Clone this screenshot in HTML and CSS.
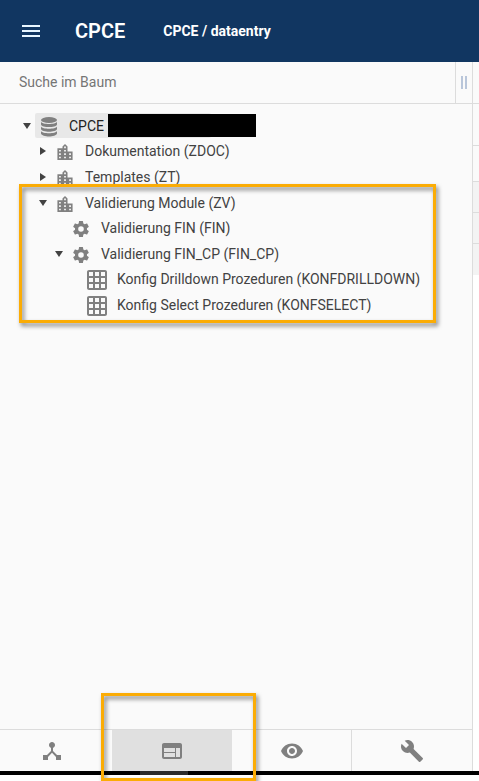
FILE: index.html
```
<!DOCTYPE html>
<html lang="de">
<head>
    <meta charset="UTF-8">
    <meta name="viewport" content="width=device-width, initial-scale=1.0">
    <title>CPCE / dataentry</title>
    <link rel="stylesheet" href="styles.css">
</head>
<body>
    <svg class="symbols" aria-hidden="true">
        <symbol id="database" viewBox="0 0 18 20">
            <ellipse cx="9" cy="3" rx="8" ry="3"/>
            <path d="M1 4.800c1 3 15 3 16 0v2.600c-1 3.600-15 3.600-16 0z"/>
            <path d="M1 9.400c1 3 15 3 16 0v2.600c-1 3.600-15 3.600-16 0z"/>
            <path d="M1 14c1 3 15 3 16 0v2.600c-1 4-15 4-16 0z"/>
        </symbol>
        <symbol id="building" viewBox="3 2 18 19">
            <path d="M15 11V5l-3-3-3 3v2H3v14h18V11h-6zm-8 8H5v-2h2v2zm0-4H5v-2h2v2zm0-4H5V9h2v2zm6 8h-2v-2h2v2zm0-4h-2v-2h2v2zm0-4h-2V9h2v2zm0-4h-2V5h2v2zm6 12h-2v-2h2v2zm0-4h-2v-2h2v2z"/>
        </symbol>
        <symbol id="gear" viewBox="2 2 20 20">
            <path d="M12 15.500A3.500 3.500 0 0 1 8.500 12 3.500 3.500 0 0 1 12 8.500a3.500 3.500 0 0 1 3.500 3.500 3.500 3.500 0 0 1-3.500 3.500m7.430-2.530c.04-.32.07-.64.07-.97s-.03-.66-.07-1l2.110-1.630c.19-.15.24-.42.12-.64l-2-3.460c-.12-.22-.39-.31-.61-.22l-2.490 1c-.52-.39-1.060-.73-1.690-.98l-.37-2.650A.506.506 0 0 0 14 2h-4c-.25 0-.46.18-.5.42l-.37 2.650c-.63.25-1.170.59-1.690.98l-2.490-1c-.22-.09-.49 0-.61.22l-2 3.460c-.13.22-.07.49.12.64L4.570 11c-.04.34-.07.67-.07 1s.03.65.07.97l-2.110 1.660c-.19.15-.25.42-.12.64l2 3.460c.12.22.39.3.61.22l2.490-1.010c.52.4 1.060.74 1.690.99l.37 2.650c.04.24.25.42.5.42h4c.25 0 .46-.18.5-.42l.37-2.650c.63-.26 1.170-.59 1.690-.99l2.490 1.010c.22.08.49 0 .61-.22l2-3.460c.12-.22.07-.49-.12-.64z"/>
        </symbol>
        <symbol id="grid" viewBox="2 2 20 20">
            <path d="M20 2H4c-1.100 0-2 .9-2 2v16c0 1.100.9 2 2 2h16c1.100 0 2-.9 2-2V4c0-1.100-.9-2-2-2zM8 20H4v-4h4v4zm0-6H4v-4h4v4zm0-6H4V4h4v4zm6 12h-4v-4h4v4zm0-6h-4v-4h4v4zm0-6h-4V4h4v4zm6 12h-4v-4h4v4zm0-6h-4v-4h4v4zm0-6h-4V4h4v4z"/>
        </symbol>
        <symbol id="arrow" viewBox="0 0 8 8">
            <path d="M0 1h8L4 7z"/>
        </symbol>
    </svg>

    <header class="topbar">
        <button class="menu" aria-label="Menü">
            <svg viewBox="0 0 24 24"><path d="M3 18h18v-2H3v2zm0-5h18v-2H3v2zm0-7v2h18V6H3z"/></svg>
        </button>
        <h1 class="title">CPCE</h1>
        <p class="path">CPCE / dataentry</p>
    </header>

    <main class="content">
        <section class="sidebar">
            <div class="search">
                <input class="search-input" type="text" placeholder="Suche im Baum" aria-label="Suche im Baum">
                <button class="handle" aria-label="Breite ändern"></button>
            </div>
            <ul class="tree">
                <li>
                    <div class="row open">
                        <button class="toggle" aria-label="CPCE zuklappen"><svg><use href="#arrow"/></svg></button>
                        <div class="node selected">
                            <span class="icon icon--database"><svg><use href="#database"/></svg></span>
                            <span class="label">CPCE</span>
                            <span class="redacted"></span>
                        </div>
                    </div>
                    <ul>
                        <li>
                            <div class="row">
                                <button class="toggle closed" aria-label="Dokumentation aufklappen"><svg><use href="#arrow"/></svg></button>
                                <span class="icon"><svg><use href="#building"/></svg></span>
                                <span class="label">Dokumentation (ZDOC)</span>
                            </div>
                        </li>
                        <li>
                            <div class="row">
                                <button class="toggle closed" aria-label="Templates aufklappen"><svg><use href="#arrow"/></svg></button>
                                <span class="icon"><svg><use href="#building"/></svg></span>
                                <span class="label">Templates (ZT)</span>
                            </div>
                        </li>
                        <li class="marked">
                            <div class="row open">
                                <button class="toggle" aria-label="Validierung Module zuklappen"><svg><use href="#arrow"/></svg></button>
                                <span class="icon"><svg><use href="#building"/></svg></span>
                                <span class="label">Validierung Module (ZV)</span>
                            </div>
                            <ul>
                                <li>
                                    <div class="row">
                                        <span class="toggle"></span>
                                        <span class="icon"><svg><use href="#gear"/></svg></span>
                                        <span class="label">Validierung FIN (FIN)</span>
                                    </div>
                                </li>
                                <li>
                                    <div class="row open">
                                        <button class="toggle" aria-label="Validierung FIN_CP zuklappen"><svg><use href="#arrow"/></svg></button>
                                        <span class="icon"><svg><use href="#gear"/></svg></span>
                                        <span class="label">Validierung FIN_CP (FIN_CP)</span>
                                    </div>
                                    <ul>
                                        <li>
                                            <div class="row">
                                                <span class="toggle"></span>
                                                <span class="icon icon--grid"><svg><use href="#grid"/></svg></span>
                                                <span class="label">Konfig Drilldown Prozeduren (KONFDRILLDOWN)</span>
                                            </div>
                                        </li>
                                        <li>
                                            <div class="row">
                                                <span class="toggle"></span>
                                                <span class="icon icon--grid"><svg><use href="#grid"/></svg></span>
                                                <span class="label">Konfig Select Prozeduren (KONFSELECT)</span>
                                            </div>
                                        </li>
                                    </ul>
                                </li>
                            </ul>
                            <div class="marker marker--tree"></div>
                        </li>
                    </ul>
                </li>
            </ul>
            <nav class="tabs">
                <button class="tab" aria-label="Struktur">
                    <svg viewBox="0 0 24 24"><path d="M17 16l-4-4V8.820C14.160 8.400 15 7.300 15 6c0-1.660-1.340-3-3-3S9 4.340 9 6c0 1.300.84 2.400 2 2.820V12l-4 4H3v5h5v-3.050l4-4.200 4 4.200V21h5v-5h-4z"/></svg>
                </button>
                <button class="tab active" aria-label="Masken">
                    <svg viewBox="0 0 24 24"><path d="M20 4H4c-1.100 0-1.990.9-1.990 2L2 18c0 1.100.9 2 2 2h16c1.100 0 2-.9 2-2V6c0-1.100-.9-2-2-2zm-5 14H4v-4h11v4zm0-5H4V9h11v4zm5 5h-4V9h4v9z"/></svg>
                </button>
                <button class="tab" aria-label="Ansicht">
                    <svg viewBox="0 0 24 24"><path d="M12 4.500C7 4.500 2.730 7.610 1 12c1.730 4.390 6 7.500 11 7.500s9.270-3.110 11-7.500c-1.730-4.390-6-7.500-11-7.500zM12 17c-2.760 0-5-2.240-5-5s2.240-5 5-5 5 2.240 5 5-2.240 5-5 5zm0-8c-1.660 0-3 1.340-3 3s1.340 3 3 3 3-1.340 3-3-1.340-3-3-3z"/></svg>
                </button>
                <button class="tab" aria-label="Werkzeuge">
                    <svg viewBox="0 0 24 24"><path d="M22.700 19l-9.100-9.100c.9-2.300.4-5-1.500-6.900-2-2-5-2.400-7.400-1.300L9 6 6 9 1.600 4.700C.4 7.100.9 10.100 2.900 12.100c1.900 1.900 4.600 2.400 6.900 1.500l9.100 9.100c.4.4 1 .4 1.400 0l2.300-2.300c.5-.4.5-1.100.1-1.400z"/></svg>
                </button>
            </nav>
        </section>
        <section class="panel">
            <div class="panel-top"></div>
            <div class="panel-bar"></div>
            <div class="panel-head"></div>
            <div class="panel-row"></div>
            <div class="panel-row"></div>
            <div class="panel-row"></div>
        </section>
    </main>
    <footer class="bottom">
        <div class="thumb"></div>
        <div class="marker marker--tab"></div>
    </footer>
</body>
</html>
```
FILE: styles.css
```
*{
    box-sizing: border-box;
}
body{
    margin: 0;
    height: 100vh;
    display: flex;
    flex-direction: column;
    overflow: hidden;
    background-color: #fff;
    color: #424242;
    font-family: Roboto, Arial, sans-serif;
    font-size: 14px;
}
button{
    border: none;
    padding: 0;
    background: none;
    cursor: pointer;
}
svg{
    display: block;
    fill: #808080;
}
.symbols{
    display: none;
}

/* header */
.topbar{
    display: flex;
    align-items: center;
    height: 62px;
    padding: 0 19px;
    background-color: #113661;
    color: white;
}
.menu svg{
    width: 24px;
    height: 24px;
    fill: #e8f6ff;
}
.title{
    margin: 0 38px 0 32px;
    font-size: 20px;
    font-weight: 600;
}
.path{
    margin: 0;
    font-weight: bold;
}

.content{
    flex: 1;
    display: grid;
    grid-template-columns: 1fr 7px;
    min-height: 0;
}
.sidebar{
    display: flex;
    flex-direction: column;
    min-width: 0;
    background-color: #fafafa;
}
.search{
    display: flex;
    height: 42px;
    border-bottom: 1px solid #dcdcdc;
}
.search-input{
    flex: 1;
    min-width: 0;
    border: none;
    padding: 0 19px 2px;
    background: none;
    font: inherit;
}
.search-input::placeholder{
    color: #757575;
}
.handle{
    display: flex;
    justify-content: center;
    align-items: center;
    width: 17px;
    border-left: 1px solid #dcdcdc;
}
.handle::before{
    content: "";
    width: 2px;
    height: 13px;
    border: 2px solid #b9c6da;
    border-width: 0 2px;
}

/* tree */
.tree{
    flex: 1;
    padding: 9px 0 0 19px;
}
ul{
    margin: 0;
    padding: 0;
    list-style: none;
}
ul ul{
    padding-left: 16px;
}
.row{
    display: flex;
    align-items: center;
    height: 26px;
    white-space: nowrap;
}
.row.open{
    height: 25px;
}
.toggle{
    flex: none;
    width: 16px;
}
.toggle svg{
    width: 8px;
    height: 8px;
    margin: 0 auto;
    fill: #424242;
}
.closed svg{
    transform: rotate(-90deg);
}
.icon{
    display: flex;
    flex: none;
    justify-content: center;
    width: 28px;
    margin-right: 6px;
    padding-top: 2px;
}
.icon svg{
    width: 16px;
    height: 16px;
}
.icon--database svg{
    width: 18px;
    height: 20px;
}
.icon--grid svg{
    width: 20px;
    height: 20px;
}
.node{
    display: flex;
    align-items: center;
    height: 25px;
}
.selected{
    width: 176px;
    border-radius: 2px;
    background-color: #e8e8e8;
    color: #212121;
}
.redacted{
    flex: none;
    width: 148px;
    height: 23px;
    margin-left: 4px;
    background-color: #000;
}

/* orange highlight frames */
.marked{
    position: relative;
}
.marker{
    position: absolute;
    border: 3px solid #fbac05;
    filter: drop-shadow(2px 3px 2px rgba(0, 0, 0, 0.5));
    pointer-events: none;
}
.marker--tree{
    top: -6px;
    left: -16px;
    right: 36px;
    bottom: -5px;
}
.marker--tab{
    left: 101px;
    bottom: 0;
    width: 155px;
    height: 88px;
}

/* tabs */
.tabs{
    display: grid;
    grid-template-columns: repeat(4, 1fr);
    height: 42px;
    margin-left: -8px;
    border-top: 1px solid #dcdcdc;
}
.tab{
    display: flex;
    justify-content: center;
    align-items: center;
}
.tab svg{
    width: 24px;
    height: 24px;
}
.active{
    background-color: #e0e0e0;
}
.tab:nth-child(3){
    border-right: 1px solid #dcdcdc;
}

/* panel on the right */
.panel{
    border-left: 1px solid #dcdcdc;
    background-color: #fff;
}
.panel-top, .panel-bar, .panel-head, .panel-row{
    border-bottom: 1px solid #dcdcdc;
    background-color: #fafafa;
}
.panel-top, .panel-bar{
    height: 42px;
}
.panel-head{
    height: 36px;
}
.panel-row{
    height: 31px;
    background-color: #f3f3f3;
}
.panel-row:last-child{
    border: none;
}

.bottom{
    position: relative;
    height: 10px;
    border-top: 4px solid #000;
}
.thumb{
    width: 48px;
    height: 4px;
    margin: -4px 0 0 140px;
    background-color: #2b2b2b;
}
```
